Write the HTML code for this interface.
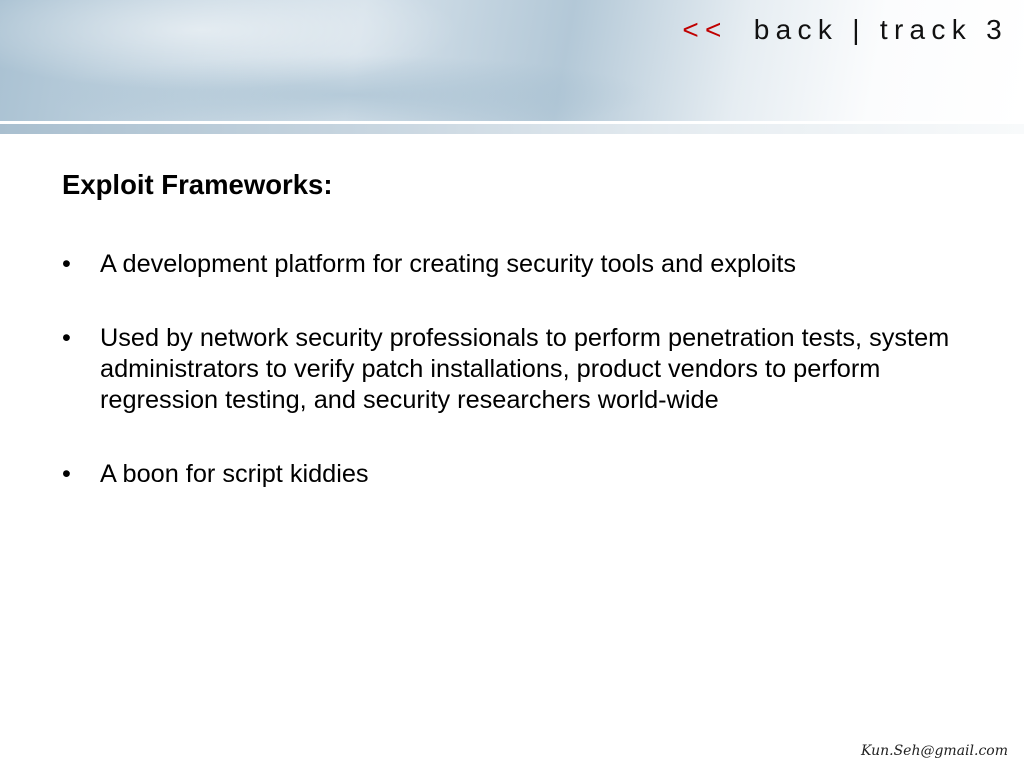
<!DOCTYPE html>
<html><head><style>
body{margin:0;width:1024px;height:768px;position:relative;overflow:hidden;background:#fff;font-family:"Liberation Sans",sans-serif;color:#000}
.hdr{position:absolute;left:0;top:0;width:1024px;height:121px;
background:
radial-gradient(ellipse 260px 60px at 200px 30px,rgba(255,255,255,.55),rgba(255,255,255,0)),
radial-gradient(ellipse 300px 40px at 350px 95px,rgba(150,180,200,.5),rgba(150,180,200,0)),
linear-gradient(100deg,#a9c1d2 0%,#c4d5e1 20%,#d5e1ea 35%,#b3c8d7 55%,#e6edf2 72%,#fbfcfd 85%,#fff 100%);}
.band{position:absolute;left:0;top:124px;width:1024px;height:10px;background:linear-gradient(90deg,#a9bfcf 0%,#cbd8e2 40%,#e8eef2 70%,#f8fafb 100%)}
.nav{position:absolute;top:14px;right:16px;font-size:28px;letter-spacing:6.3px;color:#111;white-space:nowrap}
.nav span{color:#c00000;margin-right:12px}
h1{position:absolute;left:62px;top:169px;margin:0;font-size:27.5px;font-weight:bold}
ul{position:absolute;left:62px;top:249px;margin:0;padding:0;list-style:none;width:910px;font-size:25.3px;line-height:31px}
li{position:relative;padding-left:38px;margin-bottom:43px}
li:before{content:"•";position:absolute;left:0}
.ft{position:absolute;right:16px;top:743px;font-family:"DejaVu Serif",serif;font-style:italic;font-size:14px;color:#222}
</style></head><body>
<div class="hdr"></div><div class="band"></div>
<div class="nav"><span>&lt;&lt;</span> back | track 3</div>
<h1>Exploit Frameworks:</h1>
<ul>
<li>A development platform for creating security tools and exploits</li>
<li>Used by network security professionals to perform penetration tests, system administrators to verify patch installations, product vendors to perform regression testing, and security researchers world-wide</li>
<li>A boon for script kiddies</li>
</ul>
<div class="ft">Kun.Seh@gmail.com</div>
</body></html>
